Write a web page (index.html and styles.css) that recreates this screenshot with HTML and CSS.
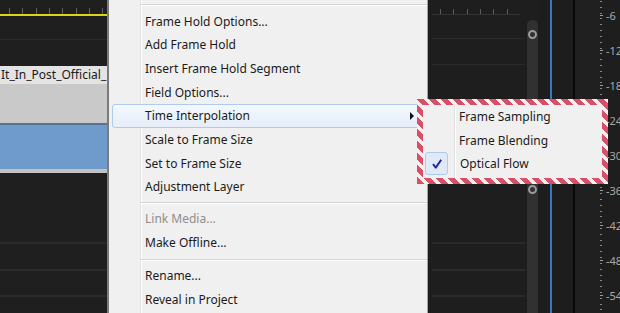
FILE: index.html
```html
<!DOCTYPE html>
<html lang="en">
  <head>
    <meta charset="UTF-8" />
    <title>Clip context menu</title>
    <link rel="stylesheet" href="styles.css">
  </head>
  <body>
    <div class="screen">
      <!-- timeline, left of the menu -->
      <div class="timeline">
        <div class="ticks"></div>
        <div class="playline"></div>
        <div class="lane lane-a"></div>
        <div class="lane-gap"></div>
        <div class="clip-name">It_In_Post_Official_</div>
        <div class="clip-body"></div>
        <div class="clip-edge"></div>
        <div class="clip-blue"></div>
        <div class="clip-foot"></div>
        <div class="lane lane-b"></div>
        <div class="lane lane-c"></div>
        <div class="lane lane-d"></div>
      </div>

      <!-- context menu -->
      <div class="menu">
        <div class="sep sep-top"></div>
        <div class="item">Frame Hold Options...</div>
        <div class="item">Add Frame Hold</div>
        <div class="item">Insert Frame Hold Segment</div>
        <div class="item">Field Options...</div>
        <div class="item active">Time Interpolation <span class="arrow"></span></div>
        <div class="item">Scale to Frame Size</div>
        <div class="item">Set to Frame Size</div>
        <div class="item">Adjustment Layer</div>
        <div class="sep"></div>
        <div class="item disabled">Link Media...</div>
        <div class="item">Make Offline...</div>
        <div class="sep sep-wide"></div>
        <div class="item">Rename...</div>
        <div class="item">Reveal in Project</div>
      </div>

      <!-- timeline and audio meters, right of the menu -->
      <div class="meters">
        <div class="lanes">
          <div class="ticks ticks-right"></div>
          <div class="rule"></div>
          <div class="lane lane-r1"></div>
          <div class="lane lane-r2"></div>
          <div class="lane lane-r3"></div>
          <div class="lane lane-r4"></div>
          <div class="lane lane-r5"></div>
        </div>
        <div class="slider">
          <div class="knob"></div>
          <div class="knob knob-low"></div>
        </div>
        <div class="gap gap-a"></div>
        <div class="cti"></div>
        <div class="gap gap-b"></div>
        <div class="divider"></div>
        <div class="gap gap-c"></div>
        <div class="scale">
          <div class="db">-6</div>
          <div class="db">-12</div>
          <div class="db">-18</div>
          <div class="db">-24</div>
          <div class="db">-30</div>
          <div class="db">-36</div>
          <div class="db">-42</div>
          <div class="db">-48</div>
          <div class="db">-54</div>
        </div>
      </div>

      <!-- submenu, highlighted with a striped frame -->
      <div class="submenu">
        <div class="submenu-inner">
          <div class="item">Frame Sampling</div>
          <div class="item">Frame Blending</div>
          <div class="item checked">
            <span class="check">
              <svg width="12" height="12" viewBox="0 0 12 12">
                <path d="M2 6.2 L4.8 9.6 L10.2 1.8" fill="none" stroke="#1d2c98" stroke-width="2" stroke-linejoin="round" />
              </svg>
            </span>
            Optical Flow
          </div>
        </div>
      </div>
    </div>
  </body>
</html>
```

FILE: styles.css
```css
body {
  margin: 0;
  background: #1e1e1e;
}

.screen {
  position: relative;
  display: flex;
  width: 620px;
  height: 313px;
  overflow: hidden;
  font-family: "Noto Sans", "Open Sans", sans-serif;
}

/* left timeline */
.timeline {
  flex: none;
  width: 107px;
  border-right: 2px solid #7a7a7a;
  background: #1f1f1f;
}

.ticks {
  margin-top: 8px;
  height: 6px;
  background: repeating-linear-gradient(to right, transparent 0 9px, #5c5c5c 9px 10px, transparent 10px 13.3px);
}

.playline {
  height: 2px;
  background: #d8d41c;
}

.lane {
  border-bottom: 2px solid #2b2b2b;
}

.lane-a {
  height: 23px;
  border-bottom-width: 1px;
}

.lane-gap {
  height: 26px;
}

.clip-name {
  height: 18px;
  line-height: 18px;
  padding-left: 1px;
  background: #e3e3e3;
  color: #1a1a1a;
  font-size: 12px;
  white-space: nowrap;
  overflow: hidden;
}

.clip-body {
  height: 39px;
  background: #c9c9c9;
}

.clip-edge {
  height: 2px;
  background: #5a7391;
}

.clip-blue {
  height: 44px;
  background: #6f9bcc;
}

.clip-foot {
  height: 4px;
  background: #c2c2c2;
}

.lane-b {
  height: 69px;
}

.lane-c {
  height: 25px;
}

.lane-d {
  height: 24px;
}

/* context menu */
.menu {
  flex: none;
  width: 318px;
  border-right: 1px solid #a3a3a3;
  background:
    linear-gradient(to right, transparent 31px, #e0e1e1 31px 32px, #fff 32px 33px, transparent 33px),
    #f0f0f0;
  font-size: 12px;
  color: #1b1b1b;
}

.sep {
  height: 8.4px;
  margin-left: 32px;
  background:
    linear-gradient(#d5d5d5, #d5d5d5) 0 3.5px / 100% 1px no-repeat,
    linear-gradient(#fff, #fff) 0 4.5px / 100% 1px no-repeat;
}

.sep-top {
  height: 9.2px;
}

.sep-wide {
  height: 9.4px;
  background-position: 0 4.5px, 0 5.5px;
}

.item {
  display: flex;
  align-items: center;
  box-sizing: border-box;
  height: 23.7px;
  margin: 0 2px 0 3px;
  padding-left: 32px;
  border: 1px solid transparent;
  border-radius: 3px;
  white-space: nowrap;
}

.item.active {
  justify-content: space-between;
  border-color: #aecbef;
  background: linear-gradient(#f4f8fd, #e4edf9);
}

.item.disabled {
  color: #8e8e8e;
}

.arrow {
  width: 0;
  height: 0;
  margin-right: 10px;
  border-left: 4px solid #111;
  border-top: 4px solid transparent;
  border-bottom: 4px solid transparent;
}

/* right side: lanes, slider and meter scale */
.meters {
  flex: 1;
  display: flex;
  background: #1e1e1e;
}

.lanes {
  width: 93px;
  padding: 0 2px 0 4px;
}

.ticks-right {
  margin: 9px 5px 0 0;
  height: 5px;
  background: repeating-linear-gradient(to right, transparent 0 8px, #5c5c5c 8px 9px, transparent 9px 13.3px);
}

.rule {
  height: 1px;
  margin-right: 5px;
  background: #333;
}

.lane-r1 {
  height: 23px;
  border-bottom-width: 1px;
}

.lane-r2 {
  height: 25px;
  border-bottom-width: 1px;
}

.lane-r3 {
  height: 177px;
}

.lane-r4 {
  height: 25px;
}

.lane-r5 {
  height: 24px;
}

.slider {
  flex: none;
  width: 11px;
  margin-top: 20px;
  padding-top: 10px;
  box-sizing: border-box;
  border-radius: 5px 5px 0 0;
  background: #313131;
}

.knob {
  box-sizing: border-box;
  width: 9px;
  height: 9px;
  margin-left: 1px;
  border: 2px solid #9c9c9c;
  border-radius: 50%;
}

.knob-low {
  margin-top: 146px;
}

.gap {
  flex: none;
  background: #1d1d1d;
}

.gap-a {
  width: 12px;
}

.gap-b {
  width: 21px;
}

.gap-c {
  width: 25px;
  background: #202020;
}

.cti {
  flex: none;
  width: 2px;
  background: #3a76bd;
}

.divider {
  flex: none;
  width: 2px;
  background: #090909;
}

.scale {
  flex: 1;
  padding-top: 0;
  margin-top: -1.5px;
  background: repeating-linear-gradient(to bottom, #8a8a8a 0 1px, transparent 1px 5.82px) 0 2px / 2px 100% no-repeat;
  font-size: 11px;
  color: #a9a9a9;
  white-space: nowrap;
  overflow: hidden;
}

.db {
  display: flex;
  align-items: center;
  height: 34.9px;
}

.db::before {
  content: "";
  width: 3px;
  height: 1px;
  margin-right: 3px;
  background: #9a9a9a;
}

/* submenu with striped callout frame */
.submenu {
  position: absolute;
  left: 417px;
  top: 99px;
  width: 191px;
  height: 85px;
  box-sizing: border-box;
  padding: 6px;
  background: repeating-linear-gradient(45deg, #d6506a 0 5px, #f3f0f0 5px 8.5px);
}

.submenu-inner {
  height: 100%;
  background:
    linear-gradient(to right, transparent 31px, #e0e1e1 31px 32px, #fff 32px 33px, transparent 33px),
    #f0f0f0;
  font-size: 12px;
  color: #1b1b1b;
}

.submenu .item {
  height: 23.5px;
  margin: 0;
  padding-left: 36px;
  border: none;
}

.submenu .item.checked {
  padding-left: 2px;
}

.check {
  display: flex;
  align-items: center;
  justify-content: center;
  box-sizing: border-box;
  width: 23px;
  height: 23px;
  margin-right: 12px;
  border: 1px solid #aecbef;
  border-radius: 3px;
  background: #dfe9f7;
}
```
